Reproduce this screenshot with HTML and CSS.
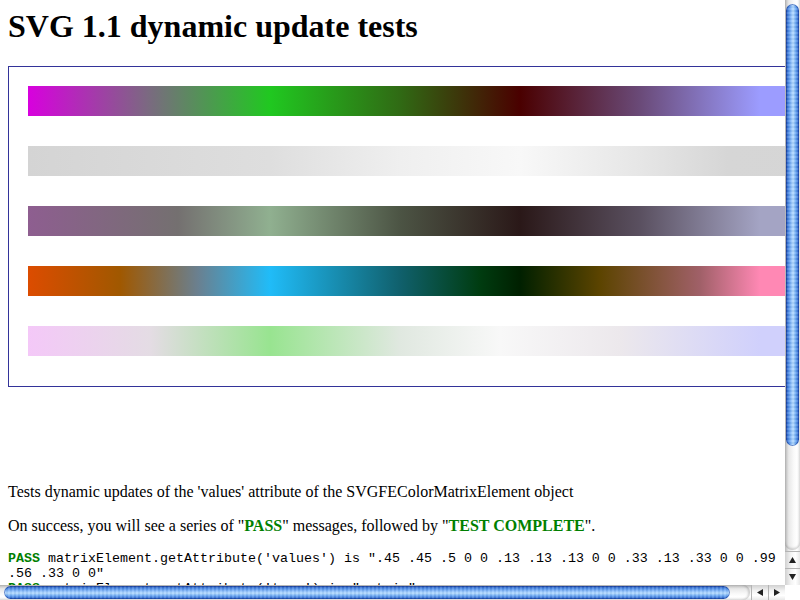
FILE: index.html
```html
<!DOCTYPE html>
<html>
<head>
<meta charset="utf-8">
<title>SVG 1.1 dynamic update tests</title>
<link rel="stylesheet" href="styles.css">
</head>
<body>
<div class="window">
  <div class="viewport">
    <h1 class="title">SVG 1.1 dynamic update tests</h1>
    <div class="box">
      <div class="bar bar1"></div>
      <div class="bar bar2"></div>
      <div class="bar bar3"></div>
      <div class="bar bar4"></div>
      <div class="bar bar5"></div>
    </div>
    <div class="spacer"></div>
    <p class="desc">Tests dynamic updates of the 'values' attribute of the SVGFEColorMatrixElement object</p>
    <p class="desc">On success, you will see a series of "<span class="pass">PASS</span>" messages, followed by "<span class="pass">TEST COMPLETE</span>".</p>
    <div class="console">
      <div class="line"><span class="pass">PASS</span> matrixElement.getAttribute('values') is ".45 .45 .5 0 0 .13 .13 .13 0 0 .33 .13 .33 0 0 .99 .56 .33 0 0"</div>
      <div class="line"><span class="pass">PASS</span> matrixElement.getAttribute('type') is "matrix"</div>
    </div>
  </div>
  <div class="vscroll">
    <div class="vtrack"><div class="vthumb"></div></div>
    <div class="vbtn"><svg width="9" height="8" viewBox="0 0 9 8"><polygon points="4.5,1 8,7 1,7" fill="#222"/></svg></div>
    <div class="vbtn"><svg width="9" height="8" viewBox="0 0 9 8"><polygon points="1,1 8,1 4.5,7" fill="#222"/></svg></div>
  </div>
  <div class="hscroll">
    <div class="htrack"><div class="hthumb"></div></div>
    <div class="hbtn"><svg width="8" height="9" viewBox="0 0 8 9"><polygon points="1,4.5 7,1 7,8" fill="#222"/></svg></div>
    <div class="hbtn"><svg width="8" height="9" viewBox="0 0 8 9"><polygon points="1,1 7,4.5 1,8" fill="#222"/></svg></div>
  </div>
  <div class="corner"></div>
</div>
</body>
</html>
```
FILE: styles.css
```css
html, body {
  margin: 0;
  padding: 0;
  background: #fff;
}
.window {
  width: 800px;
  height: 600px;
  display: grid;
  grid-template-columns: 785px 15px;
  grid-template-rows: 585px 15px;
  overflow: hidden;
}
.viewport {
  overflow: hidden;
  padding: 8px;
  box-sizing: border-box;
  font-family: "Liberation Serif", "Times New Roman", serif;
  font-size: 16px;
  color: #000;
}
.title {
  font-size: 32px;
  font-weight: bold;
  margin: 0 0 21px 0;
  line-height: 37px;
  white-space: nowrap;
}
.box {
  width: 1000px;
  height: 321px;
  border: 1px solid #333399;
  padding: 19px 0 0 19px;
  box-sizing: border-box;
  display: flex;
  flex-direction: column;
  gap: 30px;
}
.bar {
  width: 980px;
  height: 30px;
  flex: none;
}
.bar1 {
  background: linear-gradient(to right, #d800de 0px, #7a6a80 121px, #20c820 242px, #306a14 372px, #4a0000 492px, #6a4a78 612px, #9c9cff 732px, #9c9cff 980px);
}
.bar2 {
  background: linear-gradient(to right, #d4d4d4 0px, #dedede 242px, #efefef 372px, #f8f8f8 492px, #e6e6e6 612px, #d6d6d6 700px, #d4d4d4 980px);
}
.bar3 {
  background: linear-gradient(to right, #8e5e90 0px, #747070 150px, #90b090 242px, #4c5444 372px, #2a1818 492px, #5a5060 612px, #a4a4c4 732px, #a4a4c4 980px);
}
.bar4 {
  background: linear-gradient(to right, #dc4c00 0px, #a05800 92px, #6a8090 170px, #20bcf8 242px, #10606c 372px, #003c10 452px, #002000 492px, #5c4400 572px, #a06068 672px, #ff88b4 732px, #ff88b4 980px);
}
.bar5 {
  background: linear-gradient(to right, #f4c8f8 0px, #e4dce4 122px, #98e490 242px, #e0e8e0 372px, #f8f8f8 472px, #ece8ec 592px, #d0d0fc 732px, #d0d0fc 980px);
}
.spacer {
  height: 80px;
}
.desc {
  margin: 16px 0;
  line-height: 18px;
  white-space: nowrap;
}
.pass {
  color: #008000;
  font-weight: bold;
}
.console {
  font-family: "Liberation Mono", "Courier New", monospace;
  font-size: 13.333px;
  line-height: 15px;
  width: 777px;
}
.vscroll {
  display: flex;
  flex-direction: column;
  background: linear-gradient(to right, #b8b8b8, #e8e8e8 25%, #fafafa 60%, #ffffff 80%, #e4e4e4);
}
.vtrack {
  flex: 1;
  padding: 4px 1px 0 1px;
  border-radius: 0 0 7px 7px;
  box-shadow: inset 0 -2px 2px rgba(0,0,0,0.15);
  margin-bottom: 1px;
}
.vthumb {
  height: 442px;
  border-radius: 7px;
  background:
    repeating-linear-gradient(to bottom, rgba(255,255,255,0.12) 0 2px, rgba(0,0,0,0.04) 2px 4px),
    linear-gradient(to right, #1f4fb0, #4c8ce8 20%, #9ccaff 45%, #b6dcff 55%, #6aa8f4 75%, #2c66cc 95%);
  box-shadow: inset 0 0 0 1px rgba(20,50,140,0.5);
}
.vbtn {
  height: 16px;
  display: flex;
  align-items: center;
  justify-content: center;
  border-top: 1px solid #b4b4b4;
  background: linear-gradient(to right, #d0d0d0, #f4f4f4 40%, #ffffff 70%, #e8e8e8);
}
.hscroll {
  display: flex;
  background: linear-gradient(to bottom, #b8b8b8, #e8e8e8 25%, #fafafa 60%, #ffffff 80%, #e4e4e4);
}
.htrack {
  flex: 1;
  padding: 1px 0 1px 4px;
  border-radius: 0 7px 7px 0;
  box-shadow: inset -2px 0 2px rgba(0,0,0,0.15);
  margin-right: 1px;
}
.hthumb {
  width: 726px;
  height: 13px;
  border-radius: 7px;
  background:
    repeating-linear-gradient(to right, rgba(255,255,255,0.12) 0 2px, rgba(0,0,0,0.04) 2px 4px),
    linear-gradient(to bottom, #1f4fb0, #4c8ce8 20%, #9ccaff 45%, #b6dcff 55%, #6aa8f4 75%, #2c66cc 95%);
  box-shadow: inset 0 0 0 1px rgba(20,50,140,0.5);
}
.hbtn {
  width: 16px;
  display: flex;
  align-items: center;
  justify-content: center;
  border-left: 1px solid #b4b4b4;
  background: linear-gradient(to bottom, #d0d0d0, #f4f4f4 40%, #ffffff 70%, #e8e8e8);
}
.corner {
  background: #ffffff;
}
```
